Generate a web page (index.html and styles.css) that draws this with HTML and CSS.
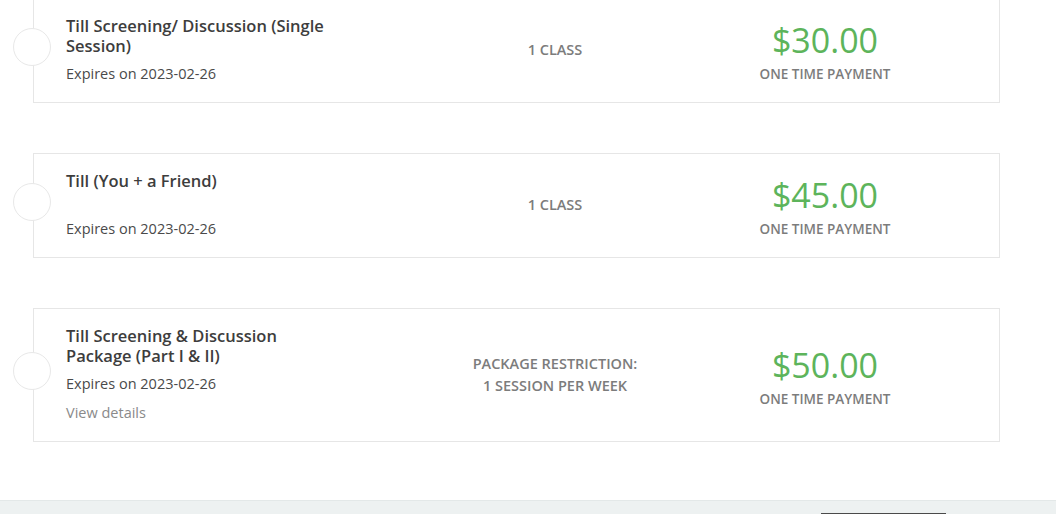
FILE: index.html
```html
<!DOCTYPE html>
<html lang="en">
<head>
<meta charset="utf-8">
<title>Plans</title>
<link rel="stylesheet" href="styles.css">
</head>
<body>
<main class="plans">
  <div class="plan">
    <span class="radio"></span>
    <div class="plan-info">
      <div class="plan-title">Till Screening/ Discussion (Single Session)</div>
      <div class="plan-expiry">Expires on 2023-02-26</div>
    </div>
    <div class="plan-limit">1 CLASS</div>
    <div class="plan-price">
      <div class="price">$30.00</div>
      <div class="price-note">ONE TIME PAYMENT</div>
    </div>
  </div>
  <div class="plan">
    <span class="radio"></span>
    <div class="plan-info">
      <div class="plan-title">Till (You + a Friend)</div>
      <div class="plan-expiry">Expires on 2023-02-26</div>
    </div>
    <div class="plan-limit">1 CLASS</div>
    <div class="plan-price">
      <div class="price">$45.00</div>
      <div class="price-note">ONE TIME PAYMENT</div>
    </div>
  </div>
  <div class="plan">
    <span class="radio"></span>
    <div class="plan-info">
      <div class="plan-title">Till Screening &amp; Discussion Package (Part I &amp; II)</div>
      <div class="plan-expiry">Expires on 2023-02-26</div>
      <a class="plan-details" href="#">View details</a>
    </div>
    <div class="plan-limit">PACKAGE RESTRICTION:<br>1 SESSION PER WEEK</div>
    <div class="plan-price">
      <div class="price">$50.00</div>
      <div class="price-note">ONE TIME PAYMENT</div>
    </div>
  </div>
</main>
<footer class="footer">
  <button class="checkout" type="button" aria-label="Continue"></button>
</footer>
</body>
</html>
```

FILE: styles.css
```css
* { box-sizing: border-box; }

html, body {
  margin: 0;
  padding: 0;
  background: #ffffff;
  font-family: "Open Sans", "Noto Sans", sans-serif;
  overflow: hidden;
}

.plans {
  display: flex;
  flex-direction: column;
  gap: 50px;
  padding: 0 56px 58px 33px;
  margin-top: -2px;
}

.plan {
  position: relative;
  display: grid;
  grid-template-columns: 364px 250px 290px;
  padding: 17px 29px 18px 32px;
  border: 1px solid #e6e6e6;
  background: #fff;
}

.radio {
  position: absolute;
  left: -21px;
  top: 50%;
  margin-top: -23px;
  width: 38px;
  height: 38px;
  border: 1px solid #e8e8e8;
  border-radius: 50%;
  background: #fff;
}

.plan-info {
  display: flex;
  flex-direction: column;
}

.plan-title {
  max-width: 275px;
  min-height: 40px;
  font-size: 16.5px;
  line-height: 20px;
  font-weight: 600;
  color: #3d3d3d;
}

.plan-expiry {
  margin-top: 8px;
  font-size: 14.5px;
  line-height: 20px;
  color: #4a4a4a;
}

.plan-details {
  margin-top: 9px;
  font-size: 14.5px;
  line-height: 20px;
  color: #8a8a8a;
  text-decoration: none;
}

.plan-limit {
  align-self: center;
  text-align: center;
  font-size: 14.5px;
  line-height: 22px;
  font-weight: 600;
  color: #7c7c7c;
}

.plan-price {
  align-self: center;
  text-align: center;
}

.price {
  font-size: 34px;
  line-height: 48px;
  color: #5db45b;
}

.price-note {
  font-size: 13.5px;
  line-height: 20px;
  font-weight: 600;
  color: #7c7c7c;
}

.footer {
  display: flex;
  justify-content: flex-end;
  height: 80px;
  padding: 12px 110px 0 0;
  background: #edf1f1;
  border-top: 1px solid #e3e8e8;
}

.checkout {
  width: 125px;
  height: 44px;
  border: 0;
  border-top: 2px solid #4a4a4a;
  background: #555;
}
```
